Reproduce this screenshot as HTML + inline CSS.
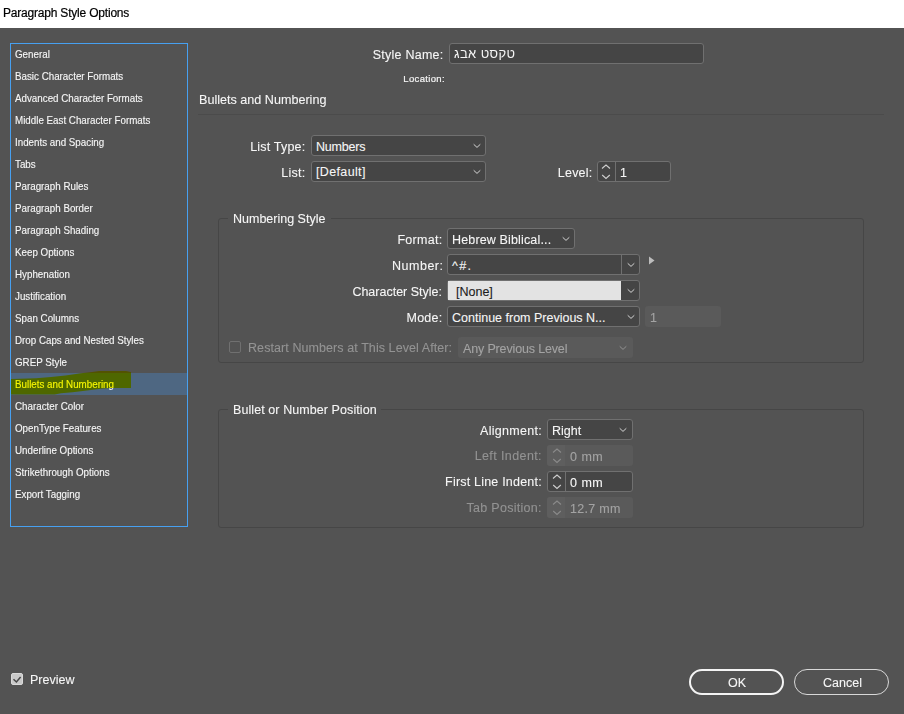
<!DOCTYPE html>
<html><head><meta charset="utf-8">
<style>
html,body{margin:0;padding:0;}
body{width:904px;height:714px;background:#535353;position:relative;overflow:hidden;font-family:"Liberation Sans",sans-serif;color:#f6f6f6;}
.a{position:absolute;white-space:pre;}
.t{position:absolute;white-space:pre;font-size:12.5px;line-height:14px;-webkit-text-stroke:0.1px currentColor;}
.r{text-align:right;}
.dis{color:#939393;}
.dv{color:#a3a3a3;}
.li{position:absolute;left:15px;font-size:10.3px;line-height:11px;white-space:pre;color:#f6f6f6;transform:scaleX(0.95);transform-origin:0 0;-webkit-text-stroke:0.12px currentColor;}
.box{position:absolute;box-sizing:border-box;border:1px solid #707070;background:#454545;border-radius:3px;height:21px;}
.dbox{position:absolute;box-sizing:border-box;background:#5a5a5a;border-radius:3px;height:21px;}
.grp{position:absolute;box-sizing:border-box;border:1px solid #464646;border-radius:3px;}
.chev{position:absolute;}
</style></head><body>
<!-- title bar -->
<div class="a" style="left:0;top:0;width:904px;height:28px;background:#fff;"></div>
<div class="a" style="left:3px;top:6px;font-size:12px;line-height:14px;letter-spacing:-0.2px;color:#000;-webkit-text-stroke:0.2px #000;">Paragraph Style Options</div>

<!-- list box -->
<div class="a" style="left:10px;top:43px;width:178px;height:484px;box-sizing:border-box;border:1px solid #47a0f0;"></div>
<div class="a" style="left:11px;top:373px;width:176px;height:22px;background:#4e6782;"></div>
<div class="li" style="top:49px">General</div>
<div class="li" style="top:71px">Basic Character Formats</div>
<div class="li" style="top:93px">Advanced Character Formats</div>
<div class="li" style="top:115px">Middle East Character Formats</div>
<div class="li" style="top:137px">Indents and Spacing</div>
<div class="li" style="top:159px">Tabs</div>
<div class="li" style="top:181px">Paragraph Rules</div>
<div class="li" style="top:203px">Paragraph Border</div>
<div class="li" style="top:225px">Paragraph Shading</div>
<div class="li" style="top:247px">Keep Options</div>
<div class="li" style="top:269px">Hyphenation</div>
<div class="li" style="top:291px">Justification</div>
<div class="li" style="top:313px">Span Columns</div>
<div class="li" style="top:335px">Drop Caps and Nested Styles</div>
<div class="li" style="top:357px">GREP Style</div>
<div class="li" style="top:379px">Bullets and Numbering</div>
<svg class="a" style="left:0;top:0;mix-blend-mode:multiply" width="200" height="400" viewBox="0 0 200 400"><polygon points="11,379 36,378.2 51,377 65.5,375.4 81,373.2 92,372.1 99,371 126,371 131,372 131,388 112,388 103,388.5 87,390.4 72.6,392.2 61,393.2 54.7,394.6 11,394.6" fill="#ffff00"/></svg>
<div class="li" style="top:401px">Character Color</div>
<div class="li" style="top:423px">OpenType Features</div>
<div class="li" style="top:445px">Underline Options</div>
<div class="li" style="top:467px">Strikethrough Options</div>
<div class="li" style="top:489px">Export Tagging</div>

<!-- style name -->
<div class="t r" style="right:460.45px;top:48.0px;letter-spacing:0.25px">Style Name:</div>
<div class="box" style="left:449px;top:43px;width:255px;"></div>
<div class="t" style="left:454px;top:47px;font-size:13px;letter-spacing:0.4px;-webkit-text-stroke:0">טקסט אבג</div>
<div class="a r" style="right:459px;top:72.5px;font-size:9.5px;line-height:11px;letter-spacing:0.35px;-webkit-text-stroke:0.2px currentColor">Location:</div>

<!-- section header -->
<div class="t" style="left:199px;top:93px;font-size:12.6px;">Bullets and Numbering</div>
<div class="a" style="left:198px;top:114px;width:686px;height:1px;background:#4b4b4b;"></div>

<div class="t r" style="right:598.60px;top:139.6px;letter-spacing:0.2px">List Type:</div>
<div class="box" style="left:311px;top:135px;width:175px;"></div>
<div class="t" style="left:316px;top:139.7px;letter-spacing:-0.2px">Numbers</div>
<svg class="a" style="left:471.5px;top:142px" width="10" height="8" viewBox="0 0 10 8"><polyline points="1.7,2.3 5,5.4 8.3,2.3" fill="none" stroke="#dcdcdc" stroke-width="0.95"/></svg>
<div class="t r" style="right:598.40px;top:165.6px;letter-spacing:0.3px">List:</div>
<div class="box" style="left:311px;top:161px;width:175px;"></div>
<div class="t" style="left:316px;top:165.2px;letter-spacing:0.35px">[Default]</div>
<svg class="a" style="left:471.5px;top:168px" width="10" height="8" viewBox="0 0 10 8"><polyline points="1.7,2.3 5,5.4 8.3,2.3" fill="none" stroke="#dcdcdc" stroke-width="0.95"/></svg>
<div class="t r" style="right:311.60px;top:165.6px;letter-spacing:0.2px">Level:</div>
<div class="box" style="left:597px;top:161px;width:74px;"></div>
<div class="a" style="left:615px;top:162px;width:1px;height:19px;background:#707070"></div>
<svg class="a" style="left:601px;top:161px" width="10" height="21" viewBox="0 0 10 21"><polyline points="1,7.5 5,4 9,7.5" fill="none" stroke="#cfcfcf" stroke-width="1.1"/><polyline points="1.2,14 5,17.4 8.8,14" fill="none" stroke="#cfcfcf" stroke-width="1.1"/></svg>
<div class="t" style="left:620px;top:165.7px">1</div>
<div class="grp" style="left:218px;top:218px;width:646px;height:145px;"></div>
<div class="a" style="left:228px;top:214px;width:103px;height:8px;background:#535353"></div>
<div class="t" style="left:233px;top:211.6px">Numbering Style</div>
<div class="t r" style="right:461.40px;top:233.3px;letter-spacing:0.3px">Format:</div>
<div class="box" style="left:447px;top:228px;width:128px;"></div>
<div class="t" style="left:452px;top:232.7px;letter-spacing:0.15px">Hebrew Biblical...</div>
<svg class="a" style="left:560.5px;top:235px" width="10" height="8" viewBox="0 0 10 8"><polyline points="1.7,2.3 5,5.4 8.3,2.3" fill="none" stroke="#dcdcdc" stroke-width="0.95"/></svg>
<div class="t r" style="right:460.50px;top:259.1px;letter-spacing:0.5px">Number:</div>
<div class="box" style="left:447px;top:254px;width:193px;"></div>
<div class="a" style="left:621px;top:255px;width:1px;height:19px;background:#707070"></div>
<div class="t" style="left:452px;top:258.7px;letter-spacing:1.3px">^#.</div>
<svg class="a" style="left:625.5px;top:261px" width="10" height="8" viewBox="0 0 10 8"><polyline points="1.7,2.3 5,5.4 8.3,2.3" fill="none" stroke="#dcdcdc" stroke-width="0.95"/></svg>
<svg class="a" style="left:647px;top:254px" width="10" height="14" viewBox="0 0 10 14"><polygon points="2,2.5 7.5,6.5 2,10.5" fill="#bdbdbd"/></svg>
<div class="t r" style="right:462px;top:284.8px">Character Style:</div>
<div class="box" style="left:447px;top:280px;width:193px;"></div>
<div class="a" style="left:448px;top:281px;width:173px;height:19px;background:#e3e3e3"></div>
<div class="t" style="left:456px;top:284.7px;color:#1c1c1c">[None]</div>
<svg class="a" style="left:625.5px;top:287px" width="10" height="8" viewBox="0 0 10 8"><polyline points="1.7,2.3 5,5.4 8.3,2.3" fill="none" stroke="#dcdcdc" stroke-width="0.95"/></svg>
<div class="t r" style="right:461.50px;top:310.6px;letter-spacing:0.25px">Mode:</div>
<div class="box" style="left:447px;top:306px;width:193px;"></div>
<div class="t" style="left:452px;top:310.7px">Continue from Previous N...</div>
<svg class="a" style="left:625.5px;top:313px" width="10" height="8" viewBox="0 0 10 8"><polyline points="1.7,2.3 5,5.4 8.3,2.3" fill="none" stroke="#dcdcdc" stroke-width="0.95"/></svg>
<div class="dbox" style="left:645px;top:306px;width:76px;"></div>
<div class="t dv" style="left:650px;top:310.7px">1</div>
<div class="a" style="left:229px;top:341px;width:12px;height:12px;box-sizing:border-box;border:1px solid #707070;border-radius:2px"></div>
<div class="t dis" style="left:248px;top:340.6px;letter-spacing:0.08px">Restart Numbers at This Level After:</div>
<div class="dbox" style="left:458px;top:337px;width:175px;"></div>
<div class="t dv" style="left:463px;top:341.7px;letter-spacing:-0.15px">Any Previous Level</div>
<svg class="a" style="left:618px;top:344px" width="10" height="8" viewBox="0 0 10 8"><polyline points="1.7,2.3 5,5.4 8.3,2.3" fill="none" stroke="#969696" stroke-width="0.95"/></svg>
<div class="grp" style="left:218px;top:409px;width:646px;height:119px;"></div>
<div class="a" style="left:228px;top:405px;width:153px;height:8px;background:#535353"></div>
<div class="t" style="left:233px;top:403.2px;letter-spacing:0.08px">Bullet or Number Position</div>
<div class="t r" style="right:362.12px;top:424.1px;letter-spacing:0.28px">Alignment:</div>
<div class="box" style="left:547px;top:419px;width:86px;"></div>
<div class="t" style="left:552px;top:423.7px">Right</div>
<svg class="a" style="left:618px;top:426px" width="10" height="8" viewBox="0 0 10 8"><polyline points="1.7,2.3 5,5.4 8.3,2.3" fill="none" stroke="#dcdcdc" stroke-width="0.95"/></svg>
<div class="t r dis" style="right:362.00px;top:449px;letter-spacing:0.4px">Left Indent:</div>
<div class="dbox" style="left:547px;top:445px;width:86px;"></div>
<div class="a" style="left:547px;top:445px;width:18px;height:21px;background:#5e5e5e;border-radius:3px 0 0 3px"></div>
<svg class="a" style="left:551.5px;top:445px" width="10" height="21" viewBox="0 0 10 21"><polyline points="1,7.5 5,4 9,7.5" fill="none" stroke="#8a8a8a" stroke-width="1.1"/><polyline points="1.2,14 5,17.4 8.8,14" fill="none" stroke="#8a8a8a" stroke-width="1.1"/></svg>
<div class="t dv" style="left:570px;top:449.7px;letter-spacing:0.5px">0 mm</div>
<div class="t r" style="right:362.20px;top:474.5px;letter-spacing:0.2px">First Line Indent:</div>
<div class="box" style="left:547px;top:471px;width:86px;"></div>
<div class="a" style="left:565px;top:472px;width:1px;height:19px;background:#707070"></div>
<svg class="a" style="left:551.5px;top:471px" width="10" height="21" viewBox="0 0 10 21"><polyline points="1,7.5 5,4 9,7.5" fill="none" stroke="#cfcfcf" stroke-width="1.1"/><polyline points="1.2,14 5,17.4 8.8,14" fill="none" stroke="#cfcfcf" stroke-width="1.1"/></svg>
<div class="t" style="left:570px;top:475.7px;letter-spacing:0.5px">0 mm</div>
<div class="t r dis" style="right:362.10px;top:500.8px;letter-spacing:0.3px">Tab Position:</div>
<div class="dbox" style="left:547px;top:497px;width:86px;"></div>
<div class="a" style="left:547px;top:497px;width:18px;height:21px;background:#5e5e5e;border-radius:3px 0 0 3px"></div>
<svg class="a" style="left:551.5px;top:497px" width="10" height="21" viewBox="0 0 10 21"><polyline points="1,7.5 5,4 9,7.5" fill="none" stroke="#8a8a8a" stroke-width="1.1"/><polyline points="1.2,14 5,17.4 8.8,14" fill="none" stroke="#8a8a8a" stroke-width="1.1"/></svg>
<div class="t dv" style="left:570px;top:501.7px;letter-spacing:0.3px">12.7 mm</div>
<div class="a" style="left:11px;top:673px;width:12px;height:12px;box-sizing:border-box;background:#c9c9c9;border:1px solid #d9d9d9;border-radius:2px"></div>
<svg class="a" style="left:11px;top:673px" width="12" height="12" viewBox="0 0 12 12"><polyline points="2.5,6.3 5.4,9 9.6,4.1" fill="none" stroke="#474747" stroke-width="1.5"/></svg>
<div class="t" style="left:30px;top:672.6px">Preview</div>
<div class="a" style="left:689px;top:669px;width:95px;height:26px;box-sizing:border-box;border:2px solid #f4f4f4;border-radius:13px"></div>
<div class="t" style="left:728px;top:675.5px">OK</div>
<div class="a" style="left:794px;top:669px;width:95px;height:26px;box-sizing:border-box;border:1px solid #d8d8d8;border-radius:13px"></div>
<div class="t" style="left:823px;top:675.5px">Cancel</div>
</body></html>
